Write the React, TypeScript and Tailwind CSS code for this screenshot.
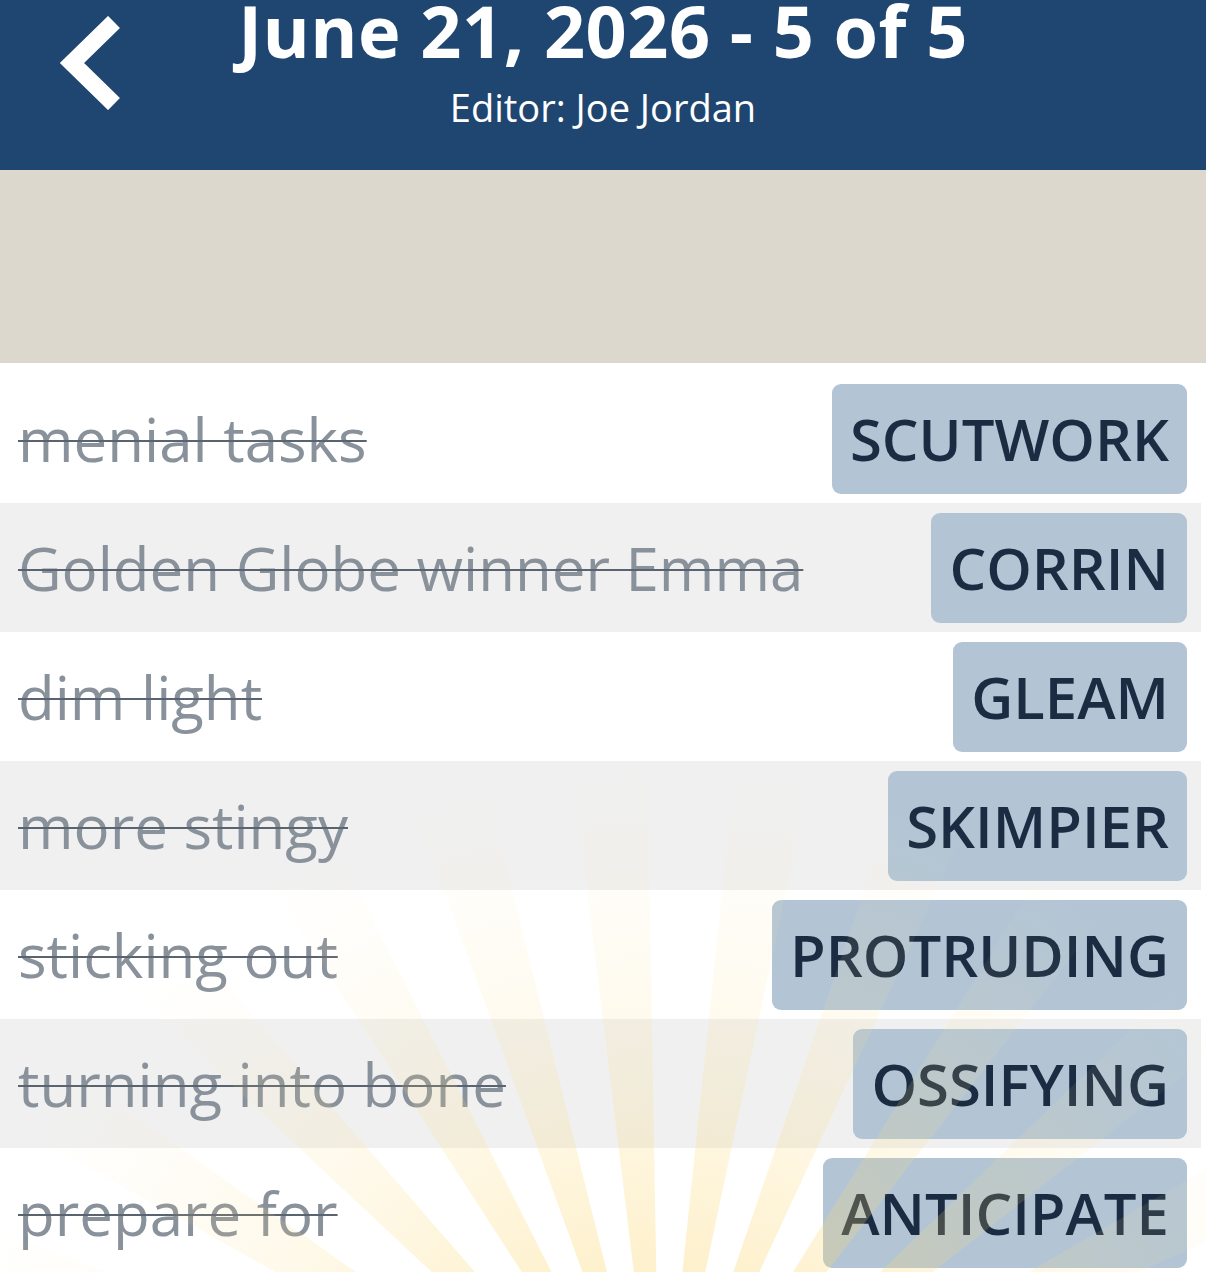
import React from "react";

const CLUES = [
  { clue: "menial tasks", answer: "SCUTWORK" },
  { clue: "Golden Globe winner Emma", answer: "CORRIN" },
  { clue: "dim light", answer: "GLEAM" },
  { clue: "more stingy", answer: "SKIMPIER" },
  { clue: "sticking out", answer: "PROTRUDING" },
  { clue: "turning into bone", answer: "OSSIFYING" },
  { clue: "prepare for", answer: "ANTICIPATE" },
];

// ray angles in degrees from vertical
const RAYS = [-72, -58, -44, -30, -17, -4, 9, 22, 35, 49, 63];

function rayPath(cx: number, cy: number, deg: number, spread: number, r: number) {
  const a1 = ((deg - spread) * Math.PI) / 180;
  const a2 = ((deg + spread) * Math.PI) / 180;
  const x1 = cx + Math.sin(a1) * r;
  const y1 = cy - Math.cos(a1) * r;
  const x2 = cx + Math.sin(a2) * r;
  const y2 = cy - Math.cos(a2) * r;
  return `M${cx} ${cy} L${x1} ${y1} L${x2} ${y2} Z`;
}

function Sunburst() {
  const cx = 660;
  const cy = 1480;
  return (
    <svg
      className="pointer-events-none absolute inset-0 h-full w-full"
      viewBox="0 0 1206 1272"
      preserveAspectRatio="none"
    >
      <defs>
        <radialGradient id="ray" cx={cx} cy={cy} r="720" gradientUnits="userSpaceOnUse">
          <stop offset="0.25" stopColor="#fbd46a" stopOpacity="0.38" />
          <stop offset="0.55" stopColor="#fbd874" stopOpacity="0.18" />
          <stop offset="1" stopColor="#fde6a8" stopOpacity="0" />
        </radialGradient>
      </defs>
      {RAYS.map((d) => (
        <path key={d} d={rayPath(cx, cy, d, 3, 900)} fill="url(#ray)" />
      ))}
    </svg>
  );
}

function ClueRow({ clue, answer, shaded }: { clue: string; answer: string; shaded: boolean }) {
  return (
    <div
      className={[
        "flex h-[129px] items-center justify-between pl-[18px] pr-[14px]",
        shaded ? "bg-[#f0f0f0]" : "bg-white",
      ].join(" ")}
    >
      <span className="whitespace-nowrap text-[60px] leading-none text-[#89919b] line-through decoration-[#5a6470] decoration-2">
        {clue}
      </span>
      <button className="flex h-[110px] items-center rounded-[9px] bg-[#b3c5d5] px-[18px] text-[58px] font-semibold leading-none text-[#1b2c42]">
        {answer}
      </button>
    </div>
  );
}

export default function App() {
  return (
    <div className="relative min-h-[1272px] w-[1206px] overflow-hidden bg-white font-['Open_Sans',sans-serif]">
      <header className="grid h-[170px] grid-cols-[160px_1fr_160px] bg-[#1f4670] text-white">
        <div className="flex items-start pl-[58px] pt-[16px]">
          <svg width="70" height="94" viewBox="0 0 70 94" fill="none">
            <polyline
              points="56,6 14,47 56,88"
              stroke="white"
              strokeWidth="17"
              strokeLinejoin="miter"
              strokeLinecap="butt"
            />
          </svg>
        </div>
        <div className="flex flex-col items-center">
          <h1 className="whitespace-nowrap text-[72px] font-bold leading-[60px] tracking-[0.5px]">
            June 21, 2026 - 5 of 5
          </h1>
          <p className="mt-[23px] text-[38px] leading-[48px]">Editor: Joe Jordan</p>
        </div>
        <div />
      </header>
      <div className="h-[193px] bg-[#ddd8cd]" />
      <div className="w-[1201px] pt-[11px]">
        {CLUES.map((c, i) => (
          <ClueRow key={c.answer} clue={c.clue} answer={c.answer} shaded={i % 2 === 1} />
        ))}
      </div>
      <Sunburst />
    </div>
  );
}
